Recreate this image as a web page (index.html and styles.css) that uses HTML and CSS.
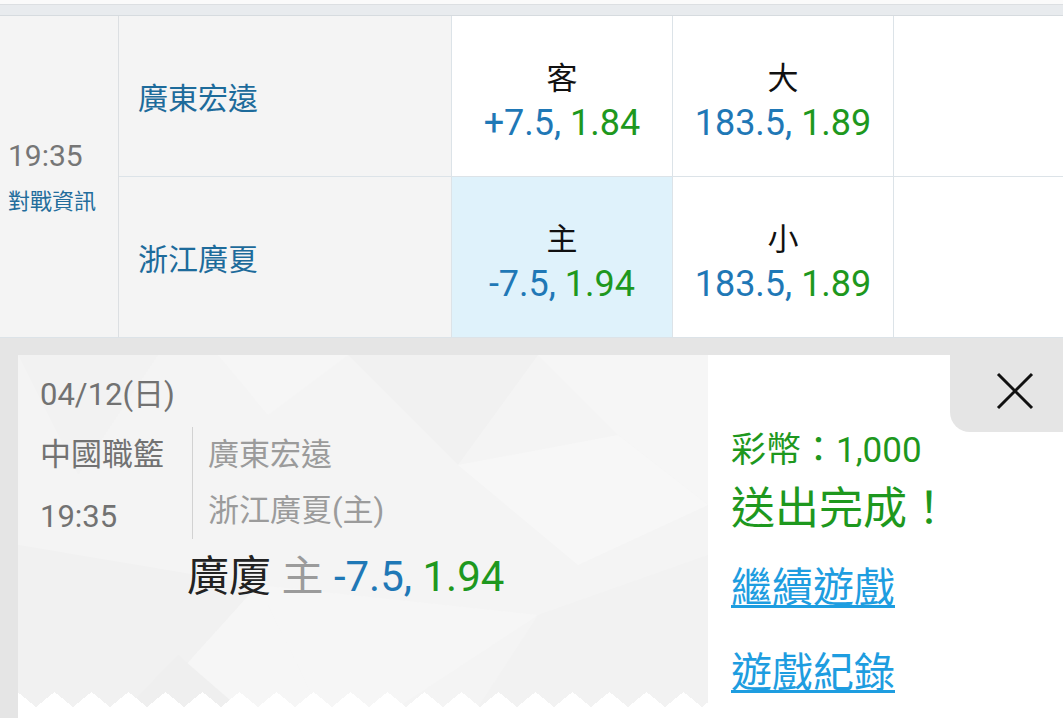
FILE: index.html
```html
<!DOCTYPE html>
<html lang="zh-Hant">
<head>
<meta charset="utf-8">
<title>投注</title>
<link rel="stylesheet" href="styles.css">
</head>
<body>
<div class="page">
  <div class="topline"></div>
  <div class="band"></div>
  <div class="board">
    <div class="cell time-cell">
      <div class="time">19:35</div>
      <div class="info">對戰資訊</div>
    </div>
    <div class="cell team">廣東宏遠</div>
    <div class="cell odds">
      <div class="label">客</div>
      <div class="val"><span class="blue">+7.5,</span> <span class="green">1.84</span></div>
    </div>
    <div class="cell odds">
      <div class="label">大</div>
      <div class="val"><span class="blue">183.5,</span> <span class="green">1.89</span></div>
    </div>
    <div class="cell blank"></div>
    <div class="cell team">浙江廣夏</div>
    <div class="cell odds selected">
      <div class="label">主</div>
      <div class="val"><span class="blue">-7.5,</span> <span class="green">1.94</span></div>
    </div>
    <div class="cell odds">
      <div class="label">小</div>
      <div class="val"><span class="blue">183.5,</span> <span class="green">1.89</span></div>
    </div>
    <div class="cell blank"></div>
  </div>
  <div class="overlay">
    <div class="ticket">
      <div class="ticket-main">
        <div class="date">04/12(日)</div>
        <div class="match">
          <div class="league">
            <div class="line">中國職籃</div>
            <div class="line low">19:35</div>
          </div>
          <div class="teams">
            <div class="line">廣東宏遠</div>
            <div class="line">浙江廣夏(主)</div>
          </div>
        </div>
        <div class="bet"><span class="dark">廣廈</span> <span class="grey">主</span> <span class="blue">-7.5,</span> <span class="green">1.94</span></div>
        <div class="zigzag"></div>
      </div>
      <div class="ticket-side">
        <button class="close" type="button" aria-label="關閉">
          <svg width="38" height="38" viewBox="0 0 38 38"><path d="M2 2 L36 36 M36 2 L2 36" stroke="#111" stroke-width="3" fill="none"/></svg>
        </button>
        <div class="coins">彩幣：1,000</div>
        <div class="done">送出完成！</div>
        <a class="link first" href="#">繼續遊戲</a>
        <a class="link" href="#">遊戲紀錄</a>
      </div>
    </div>
  </div>
</div>
</body>
</html>
```
FILE: styles.css
```css
* { box-sizing: border-box; }
html, body { margin: 0; padding: 0; }
body {
  width: 1063px;
  height: 718px;
  overflow: hidden;
  background: #fff;
  font-family: Roboto, "Noto Sans CJK TC", sans-serif;
}
.page { width: 1063px; height: 718px; display: flex; flex-direction: column; }
.topline { height: 5px; background: #fafafa; border-bottom: 1px solid #dcdfe2; }
.band { height: 11px; background: #e8ebee; border-bottom: 1px solid #d6dbdf; }

.board {
  display: grid;
  grid-template-columns: 119px 333px 221px 221px 1fr;
  grid-template-rows: 161px 161px;
}
.cell { border-bottom: 1px solid #dce3e8; border-right: 1px solid #dce3e8; }
.blank { border-right: none; background: #fff; }
.time-cell {
  grid-row: 1 / span 2;
  background: #f4f4f4;
  border-right: 1px solid #dcdfe2;
  display: flex;
  flex-direction: column;
  justify-content: center;
  padding-left: 8px;
  padding-top: 0;
}
.time { font-size: 30px; line-height: 40px; color: #767676; }
.info { font-size: 22px; line-height: 32px; color: #236d9c; margin-top: 10px; }
.team {
  background: #f4f4f4;
  display: flex;
  align-items: center;
  padding-left: 19px;
  font-size: 30px;
  color: #1d6b9b;
}
.odds {
  background: #fff;
  display: flex;
  flex-direction: column;
  align-items: center;
  justify-content: center;
  padding-top: 12px;
}
.odds.selected { background: #dff2fb; }
.label { font-size: 31px; line-height: 42px; color: #111; }
.val { font-size: 36px; line-height: 46px; white-space: nowrap; }
.blue { color: #1f78b6; }
.green { color: #1e981e; }

.overlay {
  flex: 1;
  background: #e5e5e5;
  padding: 17px 0 0 18px;
  display: flex;
}
.ticket { flex: 1; display: flex; background: #fff; }
.ticket-main {
  width: 690px;
  height: 352px;
  position: relative;
  padding: 20px 0 0 22px;
  background-color: #f4f4f4;
  background-image: url("data:image/svg+xml;utf8,<svg xmlns='http://www.w3.org/2000/svg' width='690' height='352'><polygon points='0,0 140,0 60,120' fill='%23f2f2f2'/><polygon points='200,0 330,0 250,60' fill='%23f6f6f6'/><polygon points='330,0 520,0 440,110' fill='%23f1f1f1'/><polygon points='520,0 690,0 690,150 600,80' fill='%23f6f6f6'/><polygon points='440,110 600,80 690,150 560,210' fill='%23f7f7f7'/><polygon points='0,190 240,230 130,352 0,352' fill='%23f1f1f1'/><polygon points='130,352 240,230 300,352' fill='%23f6f6f6'/><polygon points='240,230 520,260 380,352 300,352' fill='%23f6f6f6'/><polygon points='520,260 690,200 690,352 460,352' fill='%23f2f2f2'/><polygon points='160,300 220,352 110,352' fill='%23efefef'/></svg>");
  background-size: 690px 352px;
}
.date { font-size: 31px; line-height: 40px; color: #727272; }
.match { display: flex; margin-top: 12px; }
.league { width: 153px; border-right: 1px solid #d2d2d2; color: #727272; }
.teams { padding-left: 15px; color: #9b9b9b; }
.line { font-size: 31px; line-height: 56px; white-space: nowrap; }
.line.low { line-height: 44px; padding-top: 12px; }
.bet {
  margin-top: 13px;
  padding-left: 147px;
  font-size: 42px;
  line-height: 50px;
  white-space: nowrap;
}
.dark { color: #222; }
.grey { color: #9b9b9b; }
.zigzag {
  position: absolute;
  left: 0;
  right: 0;
  bottom: 0;
  height: 15px;
  background-image: conic-gradient(from 0deg at 50% 0, transparent 129deg, #fff 129deg 231deg, transparent 231deg);
  background-size: 37px 15px;
  background-position: 18px 0;
  background-repeat: repeat-x;
}
.ticket-side {
  flex: 1;
  display: flex;
  flex-direction: column;
  align-items: flex-start;
  padding-left: 23px;
}
.close {
  align-self: flex-end;
  width: 113px;
  height: 77px;
  border: none;
  margin: 0;
  padding: 0 0 6px 16px;
  background: #e5e5e5;
  border-bottom-left-radius: 20px;
  display: flex;
  align-items: center;
  justify-content: center;
}
.close svg { display: block; }
.coins { font-size: 35px; line-height: 38px; color: #1e981e; white-space: nowrap; }
.done { font-size: 44px; line-height: 50px; color: #1e981e; margin-top: 14px; white-space: nowrap; }
.link {
  font-size: 41px;
  line-height: 50px;
  color: #1e9de0;
  text-decoration: underline;
  text-decoration-thickness: 3px;
  text-underline-offset: 3px;
  white-space: nowrap;
}
.link.first { margin-top: 29px; }
.link + .link { margin-top: 35px; }
```
